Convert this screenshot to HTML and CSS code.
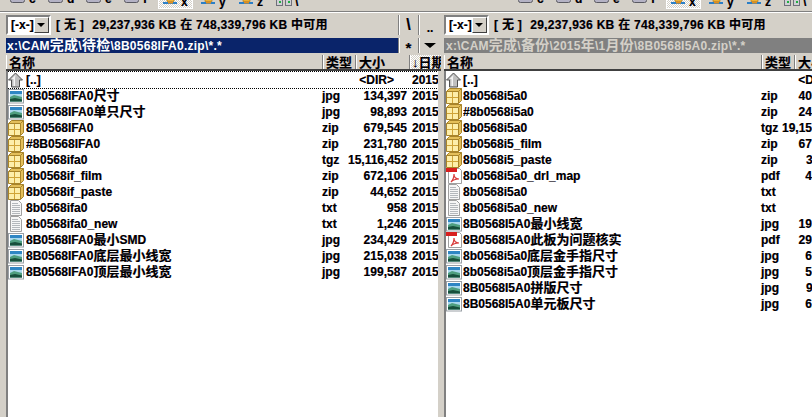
FILE: index.html
```html
<!DOCTYPE html>
<html lang="zh">
<head>
<meta charset="utf-8">
<title>Total Commander</title>
<link rel="stylesheet" href="styles.css">
</head>
<body>
<svg class="defs" width="0" height="0" aria-hidden="true">
  <symbol id="i-img" viewBox="0 0 16 16">
    <rect x="0.5" y="1.5" width="15" height="13.500" fill="#fff" stroke="#9aa0a6"/>
    <rect x="2" y="3" width="12" height="10.500" fill="#a9d8ee"/>
    <rect x="2" y="3" width="12" height="3" fill="#2f86c4"/>
    <path d="M2 9l4-2 4 1 4 1v4.500H2z" fill="#4f9f80"/>
    <path d="M2 11l5-1 7 1.500v2H2z" fill="#174f3c"/>
  </symbol>
  <symbol id="i-zip" viewBox="0 0 16 16">
    <path d="M0.500 3.500l3-3h12v12l-3 3H0.500z" fill="#e4bf5a" stroke="#a8842a"/>
    <rect x="1" y="4" width="11" height="11" fill="#fdeeaa"/>
    <path d="M1 9.500h11M6.500 4v11" stroke="#d0a438"/>
    <path d="M0.500 3.500h12v12M12.500 3.500l3-3" fill="none" stroke="#a8842a"/>
  </symbol>
  <symbol id="i-txt" viewBox="0 0 16 16">
    <path d="M2.500 0.500h8l3 3v12h-11z" fill="#f6f6f6" stroke="#a0a0a0"/>
    <path d="M4 3.500h6M4 5.500h8M4 7.500h8M4 9.500h8M4 11.500h8M4 13.500h8" stroke="#b4b8bc"/>
  </symbol>
  <symbol id="i-pdf" viewBox="0 0 16 16">
    <path d="M2.500 0.500h11l2 2v13h-13z" fill="#fff" stroke="#a0a0a0"/>
    <rect x="0" y="0" width="11" height="4" fill="#d81e1e"/>
    <path d="M5 14c2-2 3-5 3-8 0 3 2 5 5 5-3 0-6 1-8 3z" fill="none" stroke="#d83a3a" stroke-width="1.200"/>
  </symbol>
  <symbol id="i-up" viewBox="0 0 16 16">
    <path d="M7.500 1l7 7H11.500v7h-8V8H0.500z" fill="#c0c0c0" stroke="#505050"/>
    <path d="M7.500 3L3.500 7h2v7h1.500V6z" fill="#f4f4f4"/>
  </symbol>
  <symbol id="i-drive" viewBox="0 0 16 10">
    <rect x="0.500" y="-5" width="14" height="14.500" rx="2" fill="#b4b2c4" stroke="#5a5a62"/>
  </symbol>
  <symbol id="i-net" viewBox="0 0 16 10">
    <rect x="5" y="0.500" width="7" height="5" fill="#f0b030" stroke="#a07010" stroke-width="0.600"/>
    <path d="M1 7h14" stroke="#2a7fc8" stroke-width="2"/>
    <rect x="6" y="5.500" width="5" height="2" fill="#e09020"/>
  </symbol>
  <symbol id="i-share" viewBox="0 0 16 10">
    <rect x="0.500" y="2.500" width="6" height="7" fill="#d0d0d4" stroke="#70707a"/>
    <rect x="9.500" y="2.500" width="6" height="7" fill="#d0d0d4" stroke="#70707a"/>
    <rect x="3" y="5" width="2" height="2" fill="#20b040"/>
    <rect x="12" y="5" width="2" height="2" fill="#20b040"/>
  </symbol>
</svg>

<div class="app">
  <div class="drives-row">
    <div class="drives">
      <span class="drive"><svg class="di"><use href="#i-drive"/></svg>c</span>
      <span class="drive"><svg class="di"><use href="#i-drive"/></svg>d</span>
      <span class="drive"><svg class="di"><use href="#i-drive"/></svg>e</span>
      <span class="drive"><svg class="di"><use href="#i-drive"/></svg>f</span>
      <span class="drive net on"><svg class="di"><use href="#i-net"/></svg>x</span>
      <span class="drive net"><svg class="di"><use href="#i-net"/></svg>y</span>
      <span class="drive net"><svg class="di"><use href="#i-net"/></svg>z</span>
      <span class="drive net"><svg class="di"><use href="#i-share"/></svg>\</span>
    </div>
    <div class="drives second">
      <span class="drive"><svg class="di"><use href="#i-drive"/></svg>c</span>
      <span class="drive"><svg class="di"><use href="#i-drive"/></svg>d</span>
      <span class="drive"><svg class="di"><use href="#i-drive"/></svg>e</span>
      <span class="drive"><svg class="di"><use href="#i-drive"/></svg>f</span>
      <span class="drive net on"><svg class="di"><use href="#i-net"/></svg>x</span>
      <span class="drive net"><svg class="di"><use href="#i-net"/></svg>y</span>
      <span class="drive net"><svg class="di"><use href="#i-net"/></svg>z</span>
      <span class="drive net"><svg class="di"><use href="#i-share"/></svg>\</span>
    </div>
  </div>

  <div class="panels">
    <section class="panel left">
      <div class="info">
        <div class="combo"><span class="combo-text">[-x-]</span><span class="combo-btn"></span></div>
        <span class="info-label">[ 无 ]</span>
        <span class="info-text">29,237,936 KB 在 748,339,796 KB 中可用</span>
        <span class="tool tool-a slash">\</span><span class="tool tool-b dots">..</span>
      </div>
      <div class="pathrow">
        <div class="path active">x:\CAM<span class="zh">完成</span>\<span class="zh">待检</span>\8B0568IFA0.zip\*.*</div>
        <span class="tool tool-a small star">*</span><span class="tool tool-b small"><i class="tri"></i></span>
      </div>
      <div class="cols">
        <span class="col col-name">名称</span><span class="col col-ext">类型</span><span class="col col-size">大小</span><span class="col col-date">↓日期</span>
      </div>
      <div class="list">
        <div class="row focus"><svg class="ic"><use href="#i-up"/></svg><span class="name">[..]</span><span class="ext"></span><span class="size dir">&lt;DIR&gt;</span><span class="date">2015</span></div>
        <div class="row"><svg class="ic"><use href="#i-img"/></svg><span class="name">8B0568IFA0<span class="zh">尺寸</span></span><span class="ext">jpg</span><span class="size">134,397</span><span class="date">2015</span></div>
        <div class="row"><svg class="ic"><use href="#i-img"/></svg><span class="name">8B0568IFA0<span class="zh">单只尺寸</span></span><span class="ext">jpg</span><span class="size">98,893</span><span class="date">2015</span></div>
        <div class="row"><svg class="ic"><use href="#i-zip"/></svg><span class="name">8B0568IFA0</span><span class="ext">zip</span><span class="size">679,545</span><span class="date">2015</span></div>
        <div class="row"><svg class="ic"><use href="#i-zip"/></svg><span class="name">#8B0568IFA0</span><span class="ext">zip</span><span class="size">231,780</span><span class="date">2015</span></div>
        <div class="row"><svg class="ic"><use href="#i-zip"/></svg><span class="name">8b0568ifa0</span><span class="ext">tgz</span><span class="size">15,116,452</span><span class="date">2015</span></div>
        <div class="row"><svg class="ic"><use href="#i-zip"/></svg><span class="name">8b0568if_film</span><span class="ext">zip</span><span class="size">672,106</span><span class="date">2015</span></div>
        <div class="row"><svg class="ic"><use href="#i-zip"/></svg><span class="name">8b0568if_paste</span><span class="ext">zip</span><span class="size">44,652</span><span class="date">2015</span></div>
        <div class="row"><svg class="ic"><use href="#i-txt"/></svg><span class="name">8b0568ifa0</span><span class="ext">txt</span><span class="size">958</span><span class="date">2015</span></div>
        <div class="row"><svg class="ic"><use href="#i-txt"/></svg><span class="name">8b0568ifa0_new</span><span class="ext">txt</span><span class="size">1,246</span><span class="date">2015</span></div>
        <div class="row"><svg class="ic"><use href="#i-img"/></svg><span class="name">8B0568IFA0<span class="zh">最小</span>SMD</span><span class="ext">jpg</span><span class="size">234,429</span><span class="date">2015</span></div>
        <div class="row"><svg class="ic"><use href="#i-img"/></svg><span class="name">8B0568IFA0<span class="zh">底层最小线宽</span></span><span class="ext">jpg</span><span class="size">215,038</span><span class="date">2015</span></div>
        <div class="row"><svg class="ic"><use href="#i-img"/></svg><span class="name">8B0568IFA0<span class="zh">顶层最小线宽</span></span><span class="ext">jpg</span><span class="size">199,587</span><span class="date">2015</span></div>
      </div>
    </section>

    <section class="panel right">
      <div class="info">
        <div class="combo"><span class="combo-text">[-x-]</span><span class="combo-btn"></span></div>
        <span class="info-label">[ 无 ]</span>
        <span class="info-text">29,237,936 KB 在 748,339,796 KB 中可用</span>
      </div>
      <div class="pathrow">
        <div class="path inactive">x:\CAM<span class="zh">完成</span>\<span class="zh">备份</span>\2015<span class="zh">年</span>\1<span class="zh">月份</span>\8B0568I5A0.zip\*.*</div>
      </div>
      <div class="cols">
        <span class="col col-name">名称</span><span class="col col-ext">类型</span><span class="col col-size">大小</span>
      </div>
      <div class="list">
        <div class="row"><svg class="ic"><use href="#i-up"/></svg><span class="name">[..]</span><span class="ext"></span><span class="size dir">&lt;DIR&gt;</span></div>
        <div class="row"><svg class="ic"><use href="#i-zip"/></svg><span class="name">8b0568i5a0</span><span class="ext">zip</span><span class="size">408,123</span></div>
        <div class="row"><svg class="ic"><use href="#i-zip"/></svg><span class="name">#8b0568i5a0</span><span class="ext">zip</span><span class="size">245,512</span></div>
        <div class="row"><svg class="ic"><use href="#i-zip"/></svg><span class="name">8b0568i5a0</span><span class="ext">tgz</span><span class="size">19,154,020</span></div>
        <div class="row"><svg class="ic"><use href="#i-zip"/></svg><span class="name">8b0568i5_film</span><span class="ext">zip</span><span class="size">671,204</span></div>
        <div class="row"><svg class="ic"><use href="#i-zip"/></svg><span class="name">8b0568i5_paste</span><span class="ext">zip</span><span class="size">35,118</span></div>
        <div class="row"><svg class="ic"><use href="#i-pdf"/></svg><span class="name">8b0568i5a0_drl_map</span><span class="ext">pdf</span><span class="size">41,208</span></div>
        <div class="row"><svg class="ic"><use href="#i-txt"/></svg><span class="name">8b0568i5a0</span><span class="ext">txt</span><span class="size">1,024</span></div>
        <div class="row"><svg class="ic"><use href="#i-txt"/></svg><span class="name">8b0568i5a0_new</span><span class="ext">txt</span><span class="size">1,310</span></div>
        <div class="row"><svg class="ic"><use href="#i-img"/></svg><span class="name">8B0568I5A0<span class="zh">最小线宽</span></span><span class="ext">jpg</span><span class="size">192,440</span></div>
        <div class="row"><svg class="ic"><use href="#i-pdf"/></svg><span class="name">8B0568I5A0<span class="zh">此板为问题核实</span></span><span class="ext">pdf</span><span class="size">291,332</span></div>
        <div class="row"><svg class="ic"><use href="#i-img"/></svg><span class="name">8b0568i5a0<span class="zh">底层金手指尺寸</span></span><span class="ext">jpg</span><span class="size">61,220</span></div>
        <div class="row"><svg class="ic"><use href="#i-img"/></svg><span class="name">8b0568i5a0<span class="zh">顶层金手指尺寸</span></span><span class="ext">jpg</span><span class="size">58,904</span></div>
        <div class="row"><svg class="ic"><use href="#i-img"/></svg><span class="name">8B0568I5A0<span class="zh">拼版尺寸</span></span><span class="ext">jpg</span><span class="size">94,118</span></div>
        <div class="row"><svg class="ic"><use href="#i-img"/></svg><span class="name">8B0568I5A0<span class="zh">单元板尺寸</span></span><span class="ext">jpg</span><span class="size">62,730</span></div>
      </div>
    </section>
  </div>
</div>
</body>
</html>
```
FILE: styles.css
```css
* { box-sizing: border-box; }
html, body { margin: 0; padding: 0; }
body {
  width: 812px; height: 417px; overflow: hidden;
  background: #d4d0c8; color: #000;
  font: bold 12px "Liberation Sans", "Noto Sans CJK SC", sans-serif;
  text-shadow: 0.3px 0 0 rgba(0, 60, 200, .4), -0.3px 0 0 rgba(200, 90, 0, .4);
}
.defs { display: block; height: 0; }
.app { display: flex; flex-direction: column; width: 812px; height: 417px; overflow: hidden; }
.zh { font-size: 13px; line-height: 1; }

/* drive bar: only the lower edge of the buttons is in view */
.drives-row {
  display: flex; height: 12px; flex: none; overflow: hidden;
  border-bottom: 1px solid #808080; box-shadow: 0 1px 0 #fff;
}
.drives { display: flex; flex: none; width: 445px; padding-left: 6px; align-items: flex-start; }
.drives.second { width: 367px; padding-left: 69px; }
.drive {
  display: flex; align-items: flex-end; flex: none; gap: 3px;
  width: 38px; height: 11px; padding: 0 0 8px 4px;
  line-height: 8px; overflow: hidden;
}
.drive.net { padding-bottom: 5px; }
.drive.on {
  width: 35px; margin-right: 3px; height: 9px; padding-bottom: 3px;
  background: repeating-conic-gradient(#fff 0 25%, #d4d0c8 0 50%) 0 0 / 2px 2px;
  box-shadow: inset -1px -1px 0 #fff, inset 1px 0 0 #fff;
}
.di { width: 16px; height: 10px; flex: none; }

.panels { flex: 1; display: flex; min-height: 0; margin-top: 2px; }
.panel { display: flex; flex-direction: column; min-width: 0; }
.panel.left { width: 444px; flex: none; padding: 0 3px 0 6px; }
.panel.right { flex: 1; }

.info { display: flex; align-items: center; flex: none; height: 24px; padding: 1px 0 3px; line-height: 16px; }
.combo {
  display: flex; align-items: center; justify-content: space-between; flex: none;
  width: 45px; height: 20px; padding: 0 0 0 1px; background: #fff;
  border: 2px solid; border-color: #808080 #fff #fff #808080;
}
.combo-text { padding-left: 2px; white-space: nowrap; }
.combo-btn {
  position: relative; flex: none; width: 15px; height: 16px;
  background: #d4d0c8; border: 1px solid; border-color: #fff #404040 #404040 #fff;
}
.combo-btn::after {
  content: ""; position: absolute; left: 2px; top: 5px;
  border-style: solid; border-width: 4px 4px 0; border-color: #000 transparent transparent;
}
.info-label { margin-left: 5px; letter-spacing: .3px; white-space: nowrap; }
.info-text { margin-left: 8px; flex: 1; letter-spacing: .28px; white-space: nowrap; }
.tool {
  flex: none; display: flex; align-items: center; justify-content: center;
  height: 20px; border-left: 1px solid #808080; box-shadow: inset 1px 0 0 #fff;
}
.tool-a { width: 20px; }
.tool-b { width: 23px; }
.slash { font-size: 16px; }
.dots { padding-top: 6px; }
.star { font-size: 15px; padding-top: 4px; }
.tool.small { height: 15px; }
.tri { border-style: solid; border-width: 5px 6px 0; border-color: #000 transparent transparent; }

.pathrow { display: flex; height: 17px; flex: none; }
.path {
  flex: 1; height: 15px; line-height: 15px; padding-left: 1px; color: #fff;
  letter-spacing: .25px; overflow: hidden; white-space: nowrap; text-shadow: none;
}
.path .zh { font-size: 14px; }
.path.active { background: #0a246a; }
.path.inactive { background: #808080; color: #d4d0c8; padding-left: 2px; }

.cols { display: flex; height: 16px; flex: none; border-bottom: 2px solid #404040; }
.col {
  display: block; height: 14px; line-height: 16px; padding-left: 2px;
  border-right: 1px solid #808080; border-left: 1px solid #fff;
  overflow: hidden; white-space: nowrap; font-size: 13px;
}
.col-name { flex: 1; }
.left .col-ext { width: 33px; }
.left .col-size { width: 54px; }
.left .col-date {
  width: 31px; padding-left: 1px; border-right: 0;
  background: repeating-conic-gradient(#fff 0 25%, #d4d0c8 0 50%) 0 0 / 2px 2px;
}
.right .col-ext { width: 33px; }
.right .col-size { width: 17px; border-right: 0; }

.list { flex: 1; background: #fff; border-left: 2px solid #808080; overflow: hidden; padding-top: 1px; }
.left .list { margin-right: 3px; }
.row { display: flex; align-items: center; height: 16px; line-height: 16px; white-space: nowrap; }
.focus { outline: 1px dotted #000; }
.ic { width: 16px; height: 16px; flex: none; margin-right: 2px; }
.name { flex: 1; min-width: 0; overflow: hidden; }
.ext { width: 26px; flex: none; }
.size { flex: none; width: 59px; text-align: right; }
.date { width: 26px; margin-left: 5px; flex: none; overflow: hidden; }
.left .dir { padding-right: 13px; }

/* right panel rows run past the window edge and are clipped there */
.right .row { width: 396px; }
.right .ic { margin-right: 1px; }
.right .ext { width: 21px; }
.right .size { width: 60px; }
.right .dir { padding-right: 9px; }
```
